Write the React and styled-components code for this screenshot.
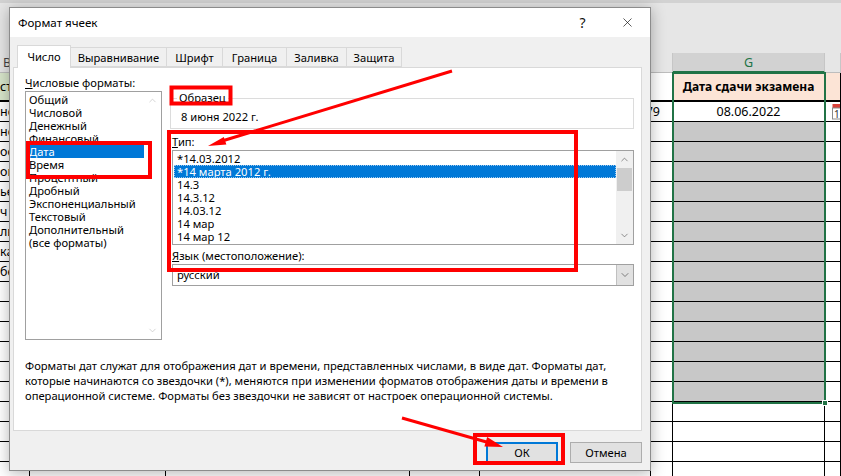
import React from "react";
import styled, { createGlobalStyle } from "styled-components";
import { ChevronUp, ChevronDown, X } from "lucide-react";

const GlobalStyle = createGlobalStyle`
  html, body {
    margin: 0;
    padding: 0;
  }
  body {
    width: 841px;
    height: 476px;
    overflow: hidden;
    background: #fff;
    font-family: "Noto Sans", "Open Sans", sans-serif;
  }
  * {
    box-sizing: border-box;
  }
`;

const formats = [
  "Общий",
  "Числовой",
  "Денежный",
  "Финансовый",
  "Дата",
  "Время",
  "Процентный",
  "Дробный",
  "Экспоненциальный",
  "Текстовый",
  "Дополнительный",
  "(все форматы)",
];

const types = [
  "*14.03.2012",
  "*14 марта 2012 г.",
  "14.3",
  "14.3.12",
  "14.03.12",
  "14 мар",
  "14 мар 12",
];

const tabs = [
  { label: "Число", w: 54, active: true },
  { label: "Выравнивание", w: 96 },
  { label: "Шрифт", w: 56 },
  { label: "Граница", w: 64 },
  { label: "Заливка", w: 60 },
  { label: "Защита", w: 55 },
];

const leftBits = ["нс", "не", "ос", "ов", "ье", "ч", "лы", "ка", "бе"];

function App() {
  const rows = Array.from({ length: 19 }, (_, i) => i);

  return (
    <>
      <GlobalStyle />
      <Page>
        <Sheet>
          <Ribbon />
          <Grid>
            <ColHead $align="left">B</ColHead>
            <ColHead />
            <ColHead />
            <ColHead />
            <ColHead />
            <ColHead />
            <ColHead $active>G</ColHead>
            <ColHead />

            <Cell $head $fill="#d8e6cb">ст</Cell>
            <Cell $head />
            <Cell $head />
            <Cell $head />
            <Cell $head />
            <Cell $head />
            <Cell $head $fill="#fce4d6" $bold $align="center">
              Дата сдачи экзамена
            </Cell>
            <Cell $head $fill="#fce4d6" />

            {rows.map((r) => (
              <React.Fragment key={r}>
                <Cell>{leftBits[r] || ""}</Cell>
                <Cell />
                <Cell />
                <Cell />
                <Cell />
                <Cell $align="right">{r === 0 ? "79" : ""}</Cell>
                <Cell
                  $align="center"
                  $fill={r >= 1 && r <= 14 ? "#c8c8c8" : "#fff"}
                >
                  {r === 0 ? "08.06.2022" : ""}
                </Cell>
                <Cell>{r === 0 && <CalendarIcon />}</Cell>
              </React.Fragment>
            ))}
          </Grid>
          <Selection>
            <FillHandle />
          </Selection>
        </Sheet>

        <Dialog>
          <TitleBar>
            <Title>Формат ячеек</Title>
            <TitleButton>?</TitleButton>
            <TitleButton>
              <X size={15} strokeWidth={1.1} />
            </TitleButton>
          </TitleBar>
          <Body>
            <Tabs>
              {tabs.map((t) => (
                <Tab key={t.label} $active={t.active} $w={t.w}>
                  {t.label}
                </Tab>
              ))}
            </Tabs>
            <Panel>
              <TopRow>
                <LeftCol>
                  <Label>
                    <u>Ч</u>исловые форматы:
                  </Label>
                  <ListBox $h={249}>
                    <Items>
                      {formats.map((f) => (
                        <Item key={f} $selected={f === "Дата"} $pad={2}>
                          {f}
                        </Item>
                      ))}
                    </Items>
                    <ScrollBar>
                      <ScrollArrow $dim>
                        <ChevronUp size={11} strokeWidth={1.5} />
                      </ScrollArrow>
                      <ScrollArrow $dim>
                        <ChevronDown size={11} strokeWidth={1.5} />
                      </ScrollArrow>
                    </ScrollBar>
                  </ListBox>
                </LeftCol>
                <RightCol>
                  <Sample>
                    <Legend>Образец</Legend>
                    8 июня 2022 г.
                  </Sample>
                  <Label $top={5}>
                    <u>Т</u>ип:
                  </Label>
                  <ListBox $h={95}>
                    <Items>
                      {types.map((t) => (
                        <Item
                          key={t}
                          $selected={t === "*14 марта 2012 г."}
                          $pad={3}
                          $focus
                        >
                          {t}
                        </Item>
                      ))}
                    </Items>
                    <ScrollBar $track>
                      <ScrollArrow>
                        <ChevronUp size={11} strokeWidth={1.5} />
                      </ScrollArrow>
                      <Thumb />
                      <ScrollArrow>
                        <ChevronDown size={11} strokeWidth={1.5} />
                      </ScrollArrow>
                    </ScrollBar>
                  </ListBox>
                  <Label $top={3}>
                    <u>Я</u>зык (местоположение):
                  </Label>
                  <Combo>
                    <ComboText>русский</ComboText>
                    <ComboButton>
                      <ChevronDown size={12} strokeWidth={1.3} />
                    </ComboButton>
                  </Combo>
                </RightCol>
              </TopRow>
              <Description>
                Форматы дат служат для отображения дат и времени, представленных
                числами, в виде дат. Форматы дат,
                <br />
                которые начинаются со звездочки (*), меняются при изменении
                форматов отображения даты и времени в
                <br />
                операционной системе. Форматы без звездочки не зависят от
                настроек операционной системы.
              </Description>
            </Panel>
            <Buttons>
              <Button $default>ОК</Button>
              <Button>Отмена</Button>
            </Buttons>
          </Body>
        </Dialog>

        <Annotations viewBox="0 0 841 476">
          <rect x="171.5" y="87.5" width="59" height="16" />
          <rect x="28" y="143" width="122" height="34" />
          <rect x="169" y="132" width="407" height="138" />
          <rect x="475" y="435" width="88" height="28" />
          <line x1="452" y1="71" x2="222" y2="141" />
          <polygon points="208,146 226.4,144.5 223.8,136.9" />
          <line x1="402" y1="418" x2="490" y2="443" />
          <polygon points="503,447 484.4,446.6 487.2,437" />
        </Annotations>
      </Page>
    </>
  );
}

function CalendarIcon() {
  return (
    <CalendarSvg width="12" height="17" viewBox="0 0 12 17">
      <rect x="0.5" y="1" width="11" height="4" fill="#d9413a" />
      <rect x="0.5" y="5" width="11" height="11" fill="#fff" stroke="#8a8a8a" />
      <text x="2" y="14.5" fontSize="10" fontFamily="Noto Sans" fill="#333">
        1
      </text>
    </CalendarSvg>
  );
}

export default App;

const Page = styled.div`
  position: relative;
  width: 841px;
  height: 476px;
  overflow: hidden;
  background: #fff;
`;

const Sheet = styled.div`
  position: relative;
  display: flex;
  flex-direction: column;
  height: 100%;
  font-family: "Noto Sans", sans-serif;
  font-size: 12.5px;
  color: #000;
`;

const Ribbon = styled.div`
  height: 53px;
  flex: none;
  background: #e6e6e6;
  border-top: 3px solid #d2d2d2;
`;

const Grid = styled.div`
  display: grid;
  grid-template-columns: 30px 136px 244px 70px 171px 22px 152px 1fr;
  grid-template-rows: 20px 29px;
  grid-auto-rows: 20px;
`;

const ColHead = styled.div`
  display: flex;
  align-items: center;
  justify-content: ${(p) => (p.$align === "left" ? "flex-start" : "center")};
  padding-left: ${(p) => (p.$align === "left" ? "3px" : "0")};
  background: ${(p) => (p.$active ? "#d2d2d2" : "#e6e6e6")};
  color: ${(p) => (p.$active ? "#217346" : "#444")};
  border-right: 1px solid #c6c6c6;
  border-bottom: ${(p) => (p.$active ? "2px solid #217346" : "1px solid #bdbdbd")};
  font-size: 12.5px;
`;

const Cell = styled.div`
  display: flex;
  align-items: center;
  justify-content: ${(p) =>
    p.$align === "center"
      ? "center"
      : p.$align === "right"
      ? "flex-end"
      : "flex-start"};
  padding-right: ${(p) => (p.$align === "right" ? "12px" : "0")};
  background: ${(p) => p.$fill || "#fff"};
  font-weight: ${(p) => (p.$bold ? 700 : 400)};
  font-size: ${(p) => (p.$bold ? "12px" : "12.5px")};
  white-space: nowrap;
  overflow: hidden;
  border-right: 1px solid #000;
  border-bottom: ${(p) => (p.$head ? "2px solid #000" : "1px solid #000")};
`;

const CalendarSvg = styled.svg`
  margin-left: 7px;
  flex: none;
`;

const Selection = styled.div`
  position: absolute;
  left: 672px;
  top: 72px;
  width: 154px;
  height: 332px;
  border: 2px solid #217346;
  pointer-events: none;
`;

const FillHandle = styled.div`
  position: absolute;
  right: -4px;
  bottom: -4px;
  width: 6px;
  height: 6px;
  background: #217346;
  border: 1px solid #fff;
`;

const Dialog = styled.div`
  position: absolute;
  left: 9px;
  top: 7px;
  width: 642px;
  height: 464px;
  display: flex;
  flex-direction: column;
  background: #f0f0f0;
  border: 1px solid #8c8c8c;
  box-shadow: 0 2px 14px rgba(0, 0, 0, 0.3);
  font-family: "Noto Sans", sans-serif;
  font-size: 11.2px;
  color: #000;
`;

const TitleBar = styled.div`
  height: 29px;
  flex: none;
  display: flex;
  align-items: center;
  padding-left: 8px;
  background: #fff;
`;

const Title = styled.div`
  flex: 1;
  font-size: 11.6px;
`;

const TitleButton = styled.div`
  width: 45px;
  height: 29px;
  display: flex;
  align-items: center;
  justify-content: center;
  font-size: 14px;
  color: #111;
`;

const Body = styled.div`
  flex: 1;
  display: flex;
  flex-direction: column;
  padding: 8px 8px 0 3px;
`;

const Tabs = styled.div`
  display: flex;
  align-items: flex-end;
  height: 22px;
  margin-left: 4px;
  position: relative;
  z-index: 1;
`;

const Tab = styled.div`
  width: ${(p) => p.$w}px;
  height: ${(p) => (p.$active ? "23px" : "20px")};
  margin-bottom: ${(p) => (p.$active ? "-1px" : "0")};
  display: flex;
  align-items: center;
  justify-content: center;
  background: ${(p) => (p.$active ? "#fff" : "#f0f0f0")};
  border: 1px solid #d9d9d9;
  border-bottom: ${(p) => (p.$active ? "none" : "1px solid #d9d9d9")};
  border-left: ${(p) => (p.$active ? "1px solid #d9d9d9" : "none")};
  padding-bottom: ${(p) => (p.$active ? "1px" : "0")};
  white-space: nowrap;
`;

const Panel = styled.div`
  height: 364px;
  flex: none;
  display: flex;
  flex-direction: column;
  padding: 7px 7px 0 11px;
  background: #fff;
  border: 1px solid #d9d9d9;
`;

const TopRow = styled.div`
  display: flex;
  gap: 8px;
`;

const LeftCol = styled.div`
  width: 137px;
  display: flex;
  flex-direction: column;
`;

const RightCol = styled.div`
  flex: 1;
  display: flex;
  flex-direction: column;
`;

const Label = styled.div`
  height: 16px;
  line-height: 16px;
  margin-top: ${(p) => p.$top || 0}px;
  margin-left: ${(p) => (p.$top ? "2px" : "0")};
  white-space: nowrap;

  u {
    text-underline-offset: 1px;
  }
`;

const ListBox = styled.div`
  height: ${(p) => p.$h}px;
  display: flex;
  margin-left: ${(p) => (p.$h < 200 ? "2px" : "0")};
  border: 1px solid #a0a0a0;
  background: #fff;
`;

const Items = styled.div`
  flex: 1;
  padding: 1px 0 0 1px;
  overflow: hidden;
`;

const Item = styled.div`
  height: 13px;
  line-height: 13px;
  padding-left: ${(p) => p.$pad}px;
  white-space: nowrap;
  background: ${(p) => (p.$selected ? "#0078d7" : "transparent")};
  color: ${(p) => (p.$selected ? "#fff" : "#000")};
  outline: ${(p) => (p.$selected && p.$focus ? "1px dotted #9cc8ee" : "none")};
  outline-offset: -1px;
`;

const ScrollBar = styled.div`
  width: 17px;
  flex: none;
  display: flex;
  flex-direction: column;
  justify-content: space-between;
  align-items: center;
  background: ${(p) => (p.$track ? "#f0f0f0" : "#fff")};
`;

const ScrollArrow = styled.div`
  width: 17px;
  height: 17px;
  flex: none;
  display: flex;
  align-items: center;
  justify-content: center;
  color: ${(p) => (p.$dim ? "#c2c2c2" : "#606060")};
`;

const Thumb = styled.div`
  width: 15px;
  height: 23px;
  flex: none;
  margin-bottom: auto;
  background: #cdcdcd;
`;

const Sample = styled.fieldset`
  margin: 16px 0 0 0;
  padding: 4px 10px 1px 10px;
  height: 38px;
  border: 1px solid #dcdcdc;
  line-height: 16px;
  min-width: 0;
`;

const Legend = styled.legend`
  padding: 0 2px;
  margin-left: -4px;
  line-height: 14px;
`;

const Combo = styled.div`
  height: 22px;
  display: flex;
  margin-left: 2px;
  border: 1px solid #a0a0a0;
  background: #fff;
`;

const ComboText = styled.div`
  flex: 1;
  padding-left: 4px;
  line-height: 20px;
`;

const ComboButton = styled.div`
  width: 17px;
  display: flex;
  align-items: center;
  justify-content: center;
  background: #e1e1e1;
  border-left: 1px solid #c0c0c0;
  color: #444;
`;

const Description = styled.div`
  margin-top: 18px;
  line-height: 15px;
  white-space: nowrap;
`;

const Buttons = styled.div`
  display: flex;
  justify-content: flex-end;
  gap: 12px;
  margin-top: 11px;
`;

const Button = styled.div`
  width: 72px;
  height: 21px;
  display: flex;
  align-items: center;
  justify-content: center;
  background: #e1e1e1;
  border: ${(p) => (p.$default ? "2px solid #0078d7" : "1px solid #adadad")};
`;

const Annotations = styled.svg`
  position: absolute;
  left: 0;
  top: 0;
  width: 841px;
  height: 476px;
  pointer-events: none;

  rect {
    fill: none;
    stroke: #ff0000;
    stroke-width: 4;
  }
  line {
    stroke: #ff0000;
    stroke-width: 3;
  }
  polygon {
    fill: #ff0000;
  }
`;
